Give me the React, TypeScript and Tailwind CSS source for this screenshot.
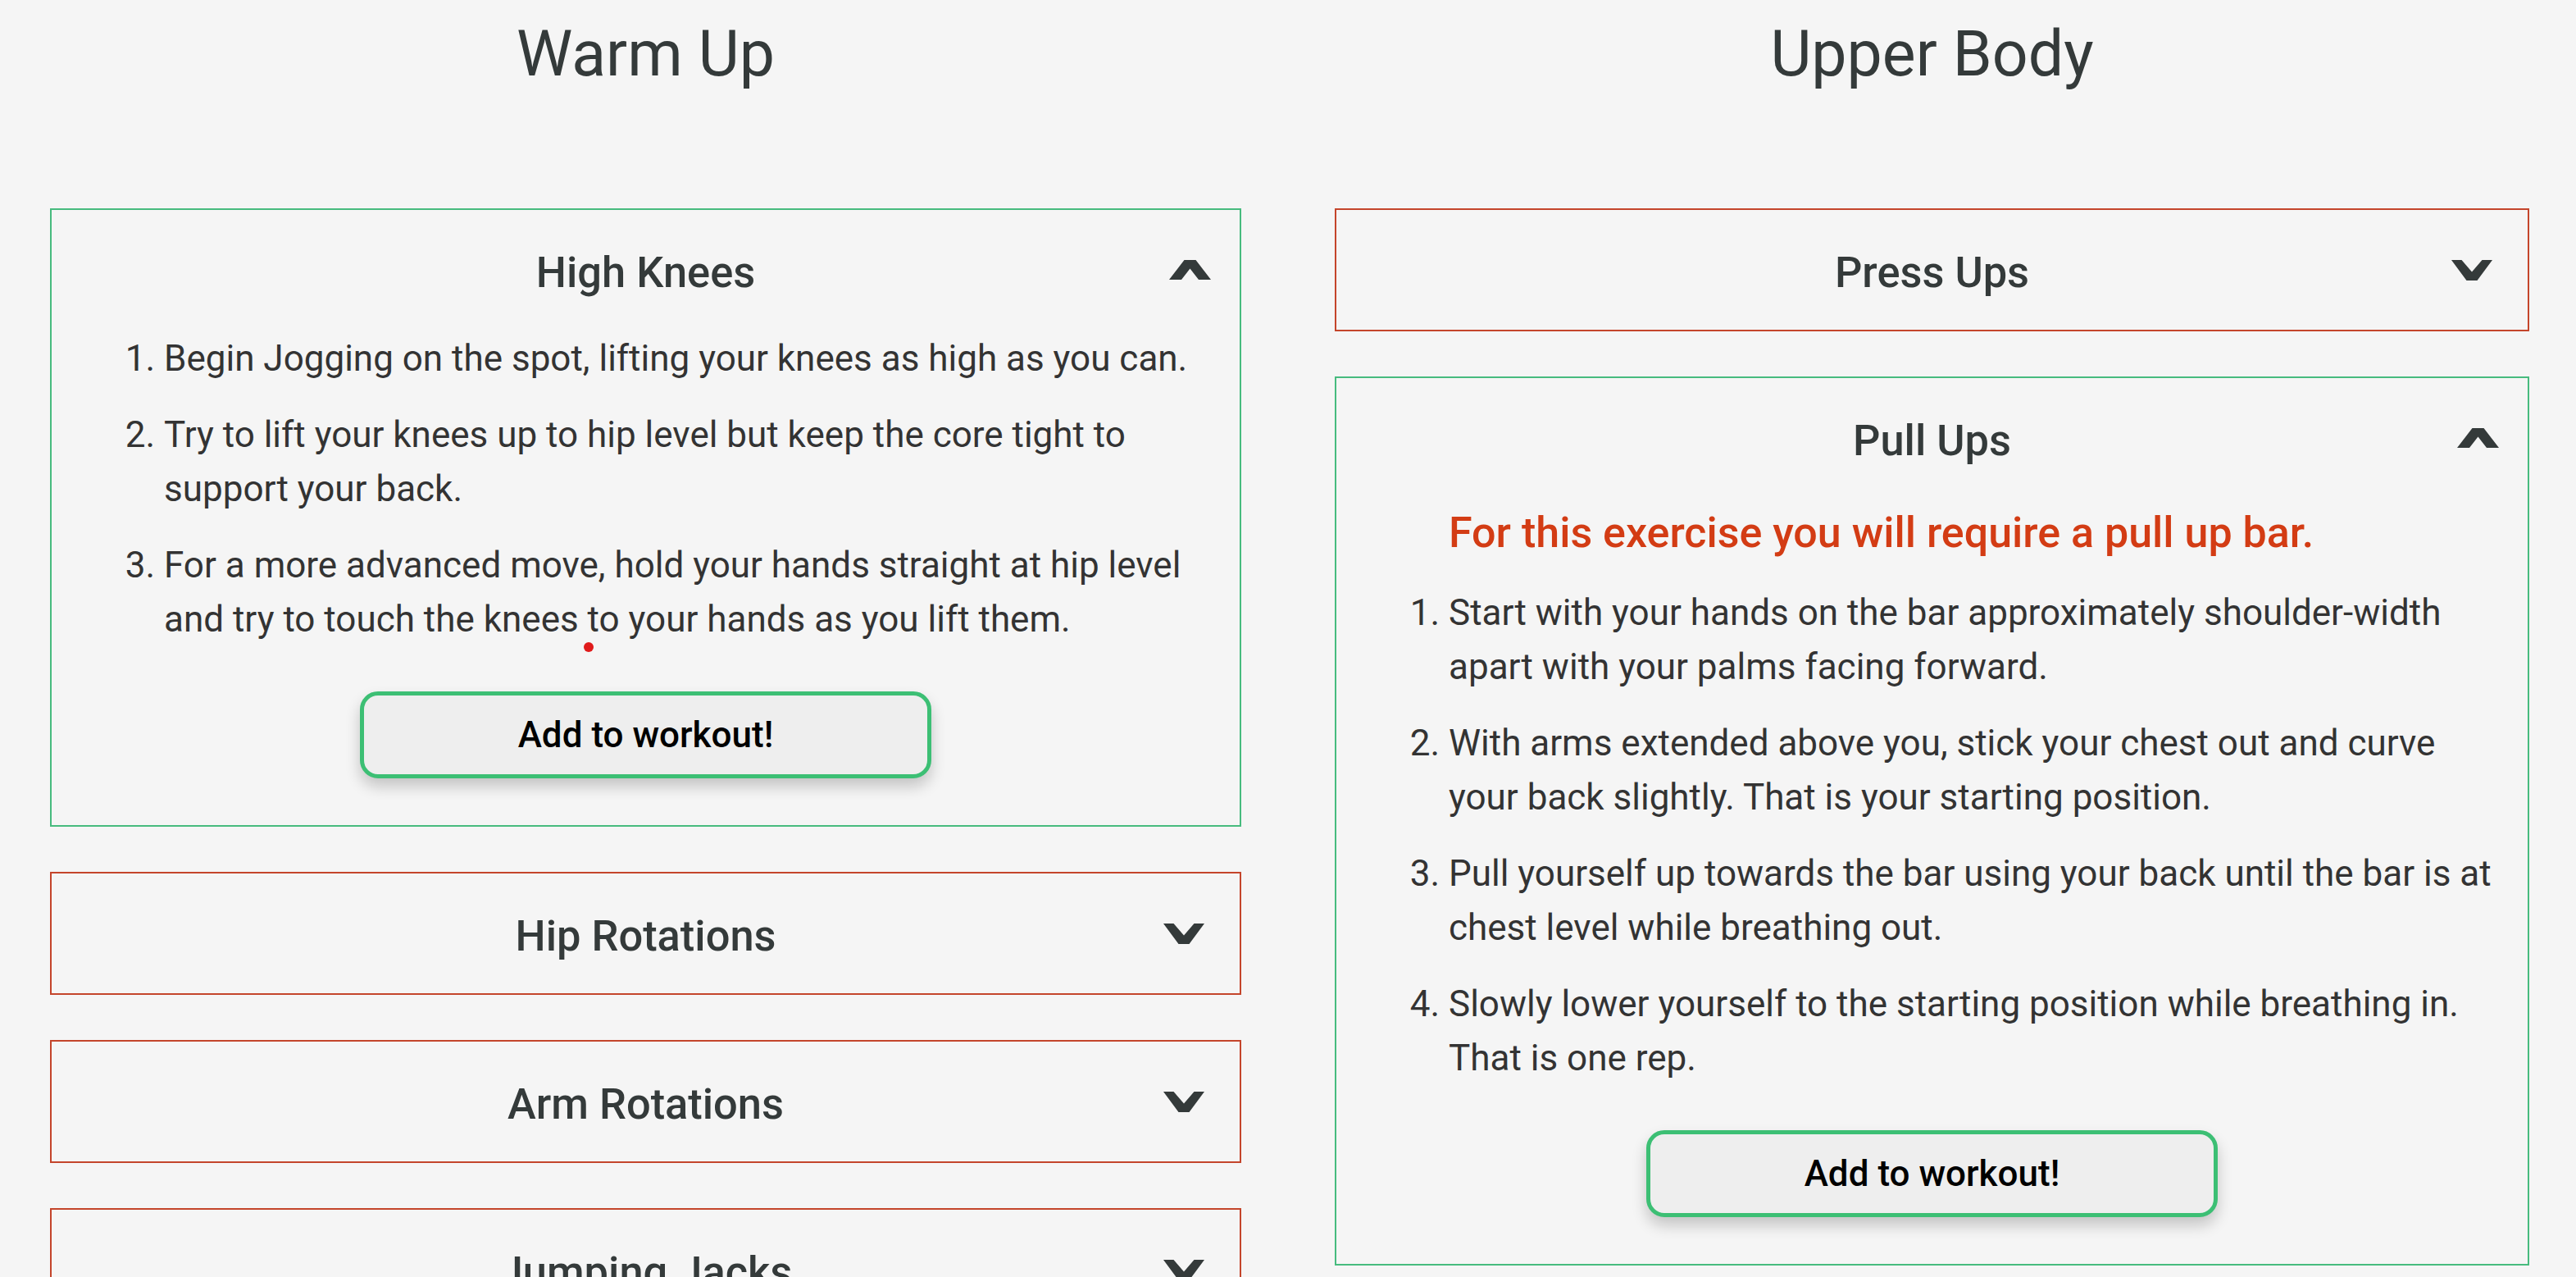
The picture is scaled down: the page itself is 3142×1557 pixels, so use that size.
import { useState } from 'react'

type Exercise = {
  name: string
  note?: string
  steps: string[]
}

const warmUp: Exercise[] = [
  {
    name: 'High Knees',
    steps: [
      'Begin Jogging on the spot, lifting your knees as high as you can.',
      'Try to lift your knees up to hip level but keep the core tight to support your back.',
      'For a more advanced move, hold your hands straight at hip level and try to touch the knees to your hands as you lift them.',
    ],
  },
  { name: 'Hip Rotations', steps: [] },
  { name: 'Arm Rotations', steps: [] },
  { name: 'Jumping Jacks', steps: [] },
]

const upperBody: Exercise[] = [
  { name: 'Press Ups', steps: [] },
  {
    name: 'Pull Ups',
    note: 'For this exercise you will require a pull up bar.',
    steps: [
      'Start with your hands on the bar approximately shoulder-width apart with your palms facing forward.',
      'With arms extended above you, stick your chest out and curve your back slightly. That is your starting position.',
      'Pull yourself up towards the bar using your back until the bar is at chest level while breathing out.',
      'Slowly lower yourself to the starting position while breathing in. That is one rep.',
    ],
  },
]

function ChevronDown() {
  return (
    <svg width="50" height="25" viewBox="0 0 50 25" className="mr-[43px]">
      <polygon points="0,0 12.5,0 25,14.5 37.5,0 50,0 31.5,25 18.5,25" fill="#343a3a" />
    </svg>
  )
}

function ChevronUp() {
  return (
    <svg width="51" height="24" viewBox="0 0 51 24" className="mr-[35px]">
      <polygon points="0,24 15,24 25.5,10.5 36,24 51,24 32.5,0 18.5,0" fill="#343a3a" />
    </svg>
  )
}

function Card({ ex, open, onToggle, dot }: { ex: Exercise; open: boolean; onToggle: () => void; dot?: boolean }) {
  return (
    <div className={`relative border-2 ${open ? 'border-[#47bb7e]' : 'border-[#c4452b]'}`}>
      <button type="button" onClick={onToggle}
        className="grid w-full h-[146px] grid-cols-[1fr_auto_1fr] items-center cursor-pointer">
        <span />
        <span className="pt-[6px] text-[52.4px] font-medium text-[#343a3a] leading-none">{ex.name}</span>
        <span className="flex justify-end">{open ? <ChevronUp /> : <ChevronDown />}</span>
      </button>

      {open && (
        <div className="pb-[57px]">
          {ex.note && (
            <p className="mt-[4px] mb-[25px] pl-[137px] text-[52px] leading-[78px] font-medium text-[#d33c14]">{ex.note}</p>
          )}
          <ol className="mt-[2px] list-decimal pl-[137px] pr-[30px] flex flex-col gap-[27px] text-[44px] leading-[66px] text-[#333]">
            {ex.steps.map((s, i) => <li key={i}>{s}</li>)}
          </ol>
          <div className="flex justify-center mt-[55px]">
            <button type="button"
              className="w-[697px] h-[106px] rounded-[22px] border-[5px] border-[#3cbf74] bg-[#eeeeee] text-black text-[44px] font-medium shadow-[0_10px_18px_rgba(0,0,0,0.2)]">
              Add to workout!
            </button>
          </div>
        </div>
      )}

      {/* stray red marker from the original capture */}
      {dot && <span className="absolute left-[649px] top-[527px] w-[12px] h-[12px] rounded-full bg-[#e01b1b]" />}
    </div>
  )
}

function Column({ title, items, initOpen, pad }: { title: string; items: Exercise[]; initOpen: string; pad: string }) {
  const [open, setOpen] = useState<string>(initOpen)
  return (
    <div className={pad}>
      <h1 className="mt-[19px] mb-[141px] text-center text-[77px] leading-[94px] text-[#343a3a]">{title}</h1>
      <div className="flex flex-col gap-[55px]">
        {items.map(ex => (
          <Card key={ex.name} ex={ex} open={open === ex.name}
            onToggle={() => setOpen(open === ex.name ? '' : ex.name)}
            dot={ex.name === 'High Knees'} />
        ))}
      </div>
    </div>
  )
}

export default function App() {
  return (
    <div className="min-h-screen bg-[#f5f5f5] font-['Roboto',sans-serif]">
      <div className="grid grid-cols-2">
        <Column title="Warm Up" items={warmUp} initOpen="High Knees" pad="pl-[61px] pr-[57px]" />
        <Column title="Upper Body" items={upperBody} initOpen="Pull Ups" pad="px-[57px]" />
      </div>
    </div>
  )
}
